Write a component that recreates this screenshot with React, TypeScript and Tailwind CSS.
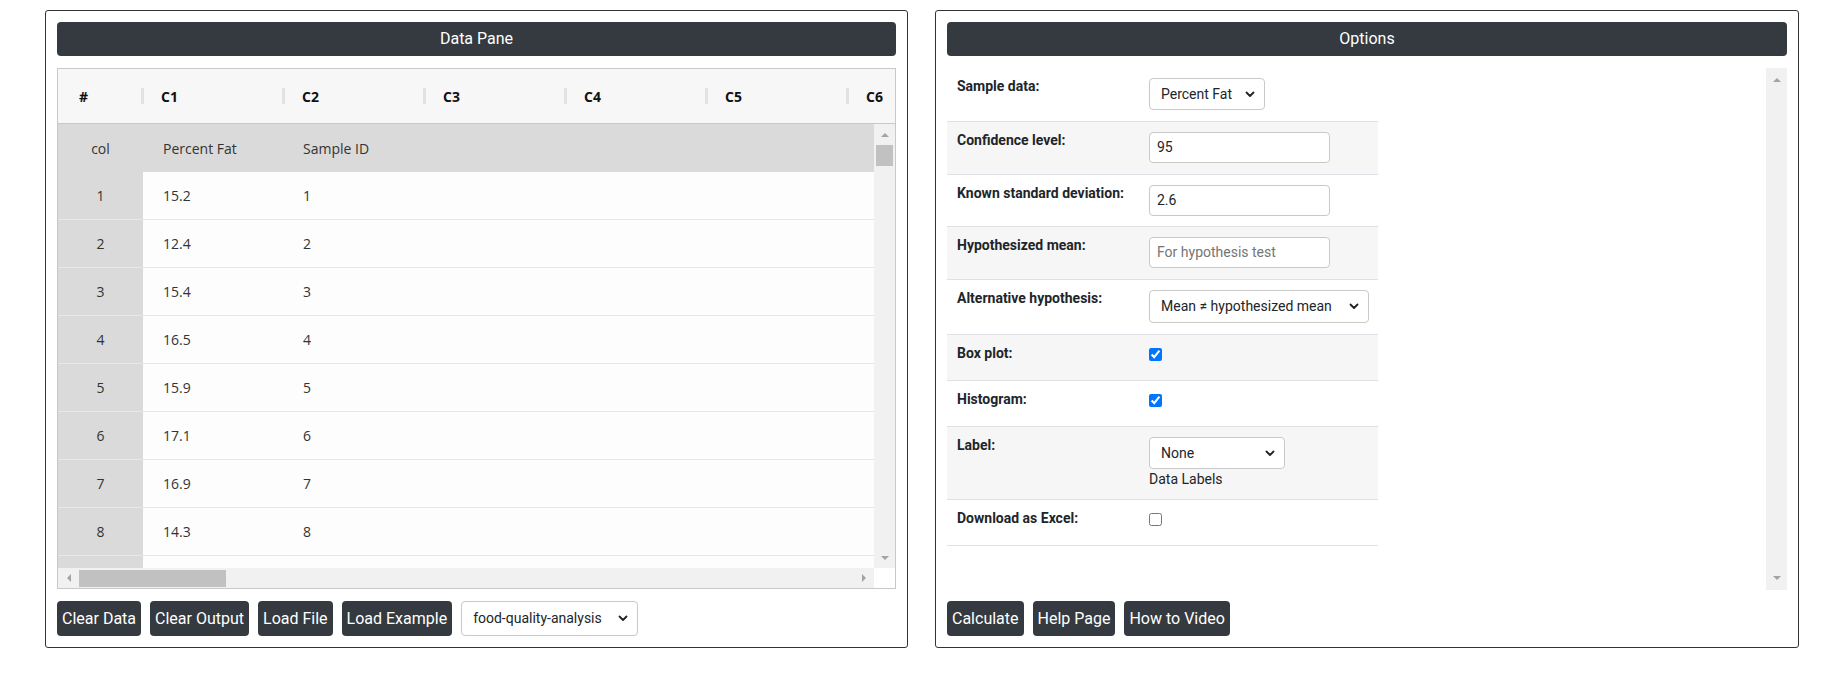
import React from 'react';

const rows = [
  ['1', '15.2', '1'],
  ['2', '12.4', '2'],
  ['3', '15.4', '3'],
  ['4', '16.5', '4'],
  ['5', '15.9', '5'],
  ['6', '17.1', '6'],
  ['7', '16.9', '7'],
  ['8', '14.3', '8'],
  ['', '', ''],
];

const Chevron = () => (
  <svg width="10" height="7" viewBox="0 0 10 7" fill="none">
    <path d="M1.5 1.5 5 5l3.5-3.5" stroke="#222" strokeWidth="1.8" strokeLinecap="round" strokeLinejoin="round" />
  </svg>
);

const Arrow = ({ dir }: { dir: 'up' | 'down' | 'left' | 'right' }) => {
  const d = {
    up: 'M0 4 4 0 8 4Z',
    down: 'M0 0 8 0 4 4Z',
    left: 'M4 0 4 8 0 4Z',
    right: 'M0 0 0 8 4 4Z',
  }[dir];
  const horiz = dir === 'left' || dir === 'right';
  return (
    <svg width={horiz ? 4 : 8} height={horiz ? 8 : 4} viewBox={horiz ? '0 0 4 8' : '0 0 8 4'}>
      <path d={d} fill="#a3a3a3" />
    </svg>
  );
};

const DarkButton = ({ children }: { children: React.ReactNode }) => (
  <button className="h-[35px] px-[5px] rounded-[4px] bg-[#343a40] text-white text-[16px] font-['Roboto',sans-serif] leading-none">
    {children}
  </button>
);

const FakeSelect = ({ value, width, height = 32, text = 14 }: { value: string; width: string; height?: number; text?: number }) => (
  <div
    className={`${width} flex items-center justify-between pl-[11px] pr-[9px] border border-[#c9c9c9] rounded-[4px] bg-white text-[#212529] font-['Roboto',sans-serif]`}
    style={{ height, fontSize: text }}
  >
    <span className="whitespace-nowrap">{value}</span>
    <Chevron />
  </div>
);

const DataPane = () => (
  <div className="w-[863px] border border-[#333] rounded-[3px] p-[11px] flex flex-col">
    <div className="h-[34px] rounded-[4px] bg-[#343a40] text-white text-[16px] font-['Roboto',sans-serif] flex items-center justify-center">
      Data Pane
    </div>

    <div className="mt-[12px] h-[521px] border border-[#c8c8c8] flex flex-col font-['Open_Sans',sans-serif] text-[14px] text-[#333]">
      <div className="h-[55px] shrink-0 bg-[#f7f7f7] border-b border-[#c8c8c8] flex overflow-hidden font-bold text-[#111]">
        <div className="w-[83px] shrink-0 flex items-center pl-[21px]">#</div>
        {['C1', 'C2', 'C3', 'C4', 'C5', 'C6'].map((c) => (
          <div key={c} className="w-[141px] shrink-0 flex items-center">
            <div className="w-[3px] h-[16px] bg-[#e1e2e8]" />
            <span className="ml-[17px]">{c}</span>
          </div>
        ))}
      </div>

      <div className="flex flex-1 min-h-0">
        <div className="flex-1 min-w-0 flex flex-col">
          <div className="flex-1 overflow-hidden bg-[#fdfdfd]">
            <div className="h-[48px] flex bg-[#dadada]">
              <div className="w-[85px] shrink-0 flex items-center justify-center">col</div>
              <div className="w-[141px] shrink-0 flex items-center pl-[20px]">Percent Fat</div>
              <div className="w-[141px] shrink-0 flex items-center pl-[19px]">Sample ID</div>
            </div>
            {rows.map(([n, v, id], i) => (
              <div key={i} className="h-[48px] flex">
                <div className="w-[85px] shrink-0 bg-[#dadada] border-b border-[#e9e9e9] flex items-center justify-center">{n}</div>
                <div className="flex-1 flex border-b border-[#e6e6e6]">
                  <div className="w-[141px] shrink-0 flex items-center pl-[20px]">{v}</div>
                  <div className="w-[141px] shrink-0 flex items-center pl-[19px]">{id}</div>
                </div>
              </div>
            ))}
          </div>
          <div className="h-[20px] shrink-0 bg-[#f1f1f1] flex items-center">
            <div className="w-[21px] h-full flex items-center justify-center">
              <Arrow dir="left" />
            </div>
            <div className="w-[147px] h-[17px] mt-[1px] bg-[#c1c1c1]" />
            <div className="flex-1" />
            <div className="w-[21px] h-full flex items-center justify-center">
              <Arrow dir="right" />
            </div>
          </div>
        </div>
        <div className="w-[21px] shrink-0 flex flex-col">
          <div className="flex-1 bg-[#f1f1f1] flex flex-col items-center">
            <div className="h-[21px] w-full flex items-center justify-center">
              <Arrow dir="up" />
            </div>
            <div className="w-[17px] h-[21px] bg-[#c1c1c1]" />
            <div className="flex-1" />
            <div className="h-[21px] w-full flex items-center justify-center">
              <Arrow dir="down" />
            </div>
          </div>
          <div className="h-[20px] bg-white" />
        </div>
      </div>
    </div>

    <div className="mt-[12px] flex items-center gap-[9px]">
      <DarkButton>Clear Data</DarkButton>
      <DarkButton>Clear Output</DarkButton>
      <DarkButton>Load File</DarkButton>
      <DarkButton>Load Example</DarkButton>
      <FakeSelect value="food-quality-analysis" width="w-[177px]" height={35} />
    </div>
  </div>
);

const OptionRow = ({
  label,
  shaded,
  h,
  children,
}: {
  label: string;
  shaded?: boolean;
  h: string;
  children: React.ReactNode;
}) => (
  <div className={`${h} flex border-b border-[#dee2e6] px-[10px] pt-[10px] ${shaded ? 'bg-[#f6f6f6]' : 'bg-white'}`}>
    <div className="w-[192px] shrink-0 font-bold text-[14px] leading-[17px] text-[#212529]">{label}</div>
    <div className="flex-1">{children}</div>
  </div>
);

const TextInput = ({ value, placeholder }: { value?: string; placeholder?: string }) => (
  <div className="w-[181px] h-[31px] border border-[#c9c9c9] rounded-[4px] bg-white flex items-center pl-[7px] text-[14px]">
    {value ? <span className="text-[#212529]">{value}</span> : <span className="text-[#757575]">{placeholder}</span>}
  </div>
);

const Check = ({ checked }: { checked?: boolean }) => (
  <div className="pt-[3px]">
    <input type="checkbox" defaultChecked={checked} className="w-[13px] h-[13px] m-0 accent-[#0075ff] block" />
  </div>
);

const Options = () => (
  <div className="w-[864px] border border-[#333] rounded-[3px] p-[11px] flex flex-col">
    <div className="h-[34px] rounded-[4px] bg-[#343a40] text-white text-[16px] font-['Roboto',sans-serif] flex items-center justify-center">
      Options
    </div>

    <div className="mt-[12px] h-[522px] flex font-['Roboto',sans-serif]">
      <div className="flex-1">
        <div className="w-[431px]">
          <OptionRow h="h-[54px]" label="Sample data:">
            <FakeSelect value="Percent Fat" width="w-[116px]" />
          </OptionRow>
          <OptionRow h="h-[53px]" label="Confidence level:" shaded>
            <TextInput value="95" />
          </OptionRow>
          <OptionRow h="h-[52px]" label="Known standard deviation:">
            <TextInput value="2.6" />
          </OptionRow>
          <OptionRow h="h-[53px]" label="Hypothesized mean:" shaded>
            <TextInput placeholder="For hypothesis test" />
          </OptionRow>
          <OptionRow h="h-[55px]" label="Alternative hypothesis:">
            <FakeSelect value="Mean ≠ hypothesized mean" width="w-[220px]" height={33} />
          </OptionRow>
          <OptionRow h="h-[46px]" label="Box plot:" shaded>
            <Check checked />
          </OptionRow>
          <OptionRow h="h-[46px]" label="Histogram:">
            <Check checked />
          </OptionRow>
          <OptionRow h="h-[73px]" label="Label:" shaded>
            <FakeSelect value="None" width="w-[136px]" />
            <div className="text-[14px] leading-[21px] text-[#212529]">Data Labels</div>
          </OptionRow>
          <OptionRow h="h-[46px]" label="Download as Excel:">
            <Check />
          </OptionRow>
        </div>
      </div>
      <div className="w-[21px] shrink-0 bg-[#f1f1f1] flex flex-col">
        <div className="h-[24px] flex items-center justify-center">
          <Arrow dir="up" />
        </div>
        <div className="flex-1" />
        <div className="h-[24px] flex items-center justify-center">
          <Arrow dir="down" />
        </div>
      </div>
    </div>

    <div className="mt-[11px] flex items-center gap-[9px]">
      <DarkButton>Calculate</DarkButton>
      <DarkButton>Help Page</DarkButton>
      <DarkButton>How to Video</DarkButton>
    </div>
  </div>
);

export default function App() {
  return (
    <div className="w-[1821px] h-[681px] bg-white pt-[10px] pl-[45px] flex items-start gap-[27px]">
      <DataPane />
      <Options />
    </div>
  );
}
